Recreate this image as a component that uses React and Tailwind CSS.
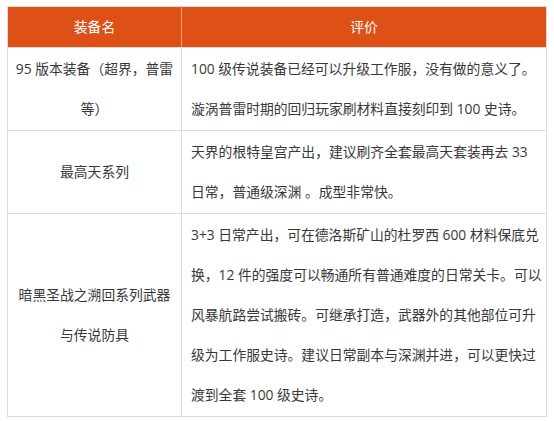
const rows = [
  {
    name: ["95 版本装备（超界，普雷", "等）"],
    notes: [
      "100 级传说装备已经可以升级工作服，没有做的意义了。",
      "漩涡普雷时期的回归玩家刷材料直接刻印到 100 史诗。",
    ],
  },
  {
    name: ["最高天系列"],
    notes: ["天界的根特皇宫产出，建议刷齐全套最高天套装再去 33", "日常，普通级深渊 。成型非常快。"],
  },
  {
    name: ["暗黑圣战之溯回系列武器", "与传说防具"],
    notes: [
      "3+3 日常产出，可在德洛斯矿山的杜罗西 600 材料保底兑",
      "换，12 件的强度可以畅通所有普通难度的日常关卡。可以",
      "风暴航路尝试搬砖。可继承打造，武器外的其他部位可升",
      "级为工作服史诗。建议日常副本与深渊并进，可以更快过",
      "渡到全套 100 级史诗。",
    ],
  },
];

export default function App() {
  return (
    <div className="pl-[7px] pt-[6px] bg-white min-h-screen font-['Open_Sans','Noto_Sans_CJK_SC',sans-serif] text-[13.8px] text-[#383838]">
      <table className="w-[540px] border-collapse table-fixed">
        <colgroup>
          <col className="w-[174px]" />
          <col />
        </colgroup>
        <thead>
          <tr>
            <th className="bg-[#dd5117] text-white font-normal leading-[40px] border border-[#dcdcdc] border-r-[#f0a27f]">
              装备名
            </th>
            <th className="bg-[#dd5117] text-white font-normal leading-[40px] border border-[#dcdcdc] border-l-[#f0a27f]">
              评价
            </th>
          </tr>
        </thead>
        <tbody>
          {rows.map((row) => (
            <tr key={row.name[0]}>
              <td className="border border-[#dcdcdc] px-[6px] py-px text-center leading-[40px] align-middle whitespace-nowrap">
                {row.name.map((n) => (
                  <div key={n}>{n}</div>
                ))}
              </td>
              <td className="border border-[#dcdcdc] px-[9px] py-px leading-[40px] align-middle whitespace-nowrap">
                {row.notes.map((n) => (
                  <p key={n}>{n}</p>
                ))}
              </td>
            </tr>
          ))}
        </tbody>
      </table>
    </div>
  );
}
